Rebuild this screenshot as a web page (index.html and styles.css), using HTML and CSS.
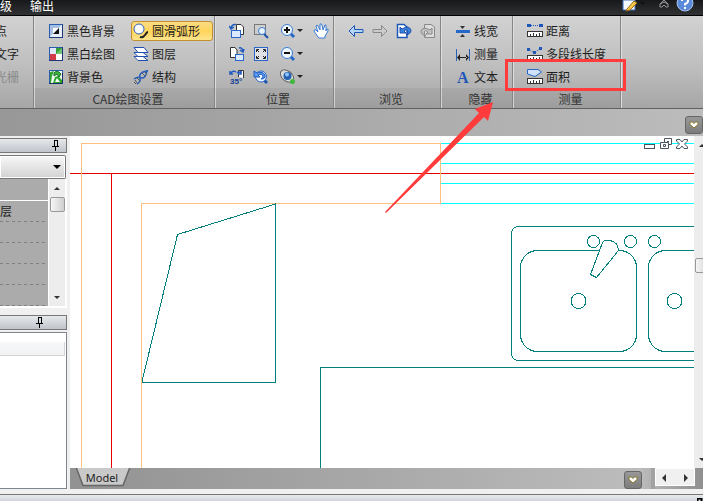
FILE: index.html
```html
<!DOCTYPE html>
<html lang="zh-CN">
<head>
    <meta charset="UTF-8">
    <meta name="viewport" content="width=device-width, initial-scale=1.0">
    <title>CAD</title>
    <link rel="stylesheet" href="styles.css">
</head>
<body>
    <header class="topbar">
        <nav class="tabs">
            <button class="tab">级</button>
            <button class="tab">输出</button>
        </nav>
        <div class="top-tools">
            <button class="top-btn" aria-label="样式">
                <svg width="24" height="12" viewBox="0 0 24 12">
                    <path d="M1 0H13V10H1Z" fill="#f4f8ff" stroke="#3a6cc0"/>
                    <path d="M5 9L12 1L15 3L8 10L4 11Z" fill="#f5c64a" stroke="#9a6c18"/>
                    <path d="M18 2H23L20.500 5Z" fill="#111"/>
                </svg>
            </button>
            <button class="top-btn" aria-label="折叠">
                <svg width="12" height="12" viewBox="0 0 12 12">
                    <path d="M2 4L6 0L10 4M2 7V4L6 2L10 4V7H8L6 5L4 7Z" fill="none" stroke="#999"/>
                </svg>
            </button>
            <button class="top-btn" aria-label="帮助">
                <svg width="18" height="12" viewBox="0 0 18 12">
                    <circle cx="9" cy="3" r="8" fill="#5b8ad8" stroke="#a9c4ee"/>
                    <path d="M6 1Q6 -2 9 -2Q12 -2 12 1Q12 3 9 4V5.500" fill="none" stroke="#fff" stroke-width="2"/>
                    <rect x="8" y="7" width="2" height="2" fill="#fff"/>
                </svg>
            </button>
        </div>
    </header>

    <section class="ribbon">
        <div class="group group-cut">
            <div class="tools">
                <button class="tool">点</button>
                <button class="tool">文字</button>
                <button class="tool" disabled>光栅</button>
            </div>
        </div>

        <div class="group group-settings">
            <div class="tools">
                <button class="tool">
                    <svg class="icon" viewBox="0 0 16 16">
                        <rect x="1.500" y="1.500" width="13" height="13" fill="#fff" stroke="#2a5cb0"/>
                        <path d="M2 2H14L2 14Z" fill="#a8bfe4"/>
                        <path d="M14 2V14H2Z" fill="#e8eef8"/>
                        <path d="M5 5H11L5 11Z" fill="#fff"/>
                        <path d="M11 5V11H5Z" fill="#111"/>
                        <path d="M14.500 1V14.500H1" fill="none" stroke="#1c3a78"/>
                    </svg>
                    黑色背景
                </button>
                <button class="tool active">
                    <svg class="icon" viewBox="0 0 16 16">
                        <circle cx="6" cy="6" r="5" fill="#fff" stroke="#2f62c0"/>
                        <path d="M7 14Q10 15 12 12Q14 9 15 9" fill="none" stroke="#222" stroke-width="2"/>
                    </svg>
                    圆滑弧形
                </button>
                <button class="tool">
                    <svg class="icon" viewBox="0 0 16 16">
                        <rect x="1.500" y="1.500" width="13" height="13" fill="#fff" stroke="#2a5cb0"/>
                        <path d="M8 2H14V8H8Z" fill="#35a035"/>
                        <path d="M14 2V8H8Z" fill="#72c872"/>
                        <path d="M2 8H8V14H2Z" fill="#d33a4a"/>
                        <path d="M2 2H8V8H2Z" fill="#dfe8f8"/>
                        <path d="M14.500 1V14.500H1" fill="none" stroke="#1c3a78"/>
                    </svg>
                    黑白绘图
                </button>
                <button class="tool">
                    <svg class="icon" viewBox="0 0 16 16" stroke="#1f4fb0" fill="#fff">
                        <path d="M1 10.500H10L15 14.500H5Z"/>
                        <path d="M1 6.500H10L15 10.500H5Z"/>
                        <path d="M1 1.500H11L15 6.500H5Z"/>
                    </svg>
                    图层
                </button>
                <button class="tool">
                    <svg class="icon" viewBox="0 0 16 16">
                        <rect x="1.500" y="1.500" width="13" height="13" fill="#f2f8f2" stroke="#2a5cb0"/>
                        <path d="M2 3L6 2L4 7L3 14H2Z" fill="#33a52f"/>
                        <path d="M5 14L7 8L10 7L14 11V14Z" fill="#2ba52b"/>
                        <path d="M6 4Q9 0 13 5L11 8L9 5L6 7Z" fill="#3cb83a" stroke="#1b6a30"/>
                        <path d="M7 13L9 9L12 13Z" fill="#fff"/>
                        <path d="M14.500 4V14.500H1" fill="none" stroke="#123067"/>
                    </svg>
                    背景色
                </button>
                <button class="tool">
                    <svg class="icon" viewBox="0 0 16 16" fill="none" stroke="#2a60b8">
                        <path d="M1 10Q5 7 8 9Q13 10 14 1M4 15Q8 13 7 9Q5 3 15 2" stroke-width="1.500"/>
                        <path d="M2 11L4 14M4 9L7 12M9 4L12 7M12 3L14 5M1 13L3 15" stroke="#555"/>
                    </svg>
                    结构
                </button>
            </div>
            <div class="group-name">CAD绘图设置</div>
        </div>

        <div class="group group-position">
            <div class="tools">
                <button class="tool" aria-label="向左旋转">
                    <svg class="icon" viewBox="0 0 16 16">
                        <path d="M7.500 1.500H12L14.500 4V11.500H7.500Z" fill="#fff" stroke="#333"/>
                        <rect x="2.500" y="7.500" width="9" height="7" fill="#dceaff" stroke="#2a66c8"/>
                        <path d="M7 1.500Q3 1 2 5M0 3L2 6L5 4" fill="none" stroke="#1f5ac0" stroke-width="1.500"/>
                    </svg>
                </button>
                <button class="tool" aria-label="窗口缩放">
                    <svg class="icon" viewBox="0 0 16 16">
                        <rect x="1.500" y="1.500" width="11" height="10" fill="none" stroke="#222" stroke-dasharray="1 1"/>
                        <path d="M11 11L15 15" stroke="#1e4fa8" stroke-width="2"/>
                        <circle cx="9" cy="8" r="3.500" fill="#eaf4ff" stroke="#3a7bd5"/>
                    </svg>
                </button>
                <button class="tool" aria-label="放大">
                    <svg class="icon" viewBox="0 0 16 16">
                        <path d="M10 10L14 14" stroke="#2368c8" stroke-width="3"/>
                        <circle cx="7" cy="7" r="5.500" fill="#eef6ff" stroke="#3a7bd5"/>
                        <path d="M4 7H10M7 4V10" stroke="#111" stroke-width="2"/>
                    </svg>
                    <i class="caret"></i>
                </button>
                <button class="tool" aria-label="平移">
                    <svg class="icon" viewBox="0 0 16 16">
                        <path d="M5 14L1 8Q1 6 3 7L5 9L3 3Q4 1 5 3L7 7L7 1Q8 0 9 2L10 7L12 2Q13 1 13 3L13 8L14 6Q16 6 15 8L12 13V15H6Z" fill="#fff" stroke="#3a7bd5"/>
                    </svg>
                </button>
                <button class="tool" aria-label="向右旋转">
                    <svg class="icon" viewBox="0 0 16 16">
                        <path d="M1.500 1.500H6L8 4V11.500H1.500Z" fill="#fff" stroke="#333"/>
                        <rect x="6.500" y="8.500" width="8" height="6" fill="#dceaff" stroke="#2a66c8"/>
                        <path d="M10 2Q13 1 14 5M11 4L14 6L15 3" fill="none" stroke="#1f5ac0" stroke-width="1.500"/>
                    </svg>
                </button>
                <button class="tool" aria-label="适合窗口">
                    <svg class="icon" viewBox="0 0 16 16">
                        <rect x="1.500" y="1.500" width="13" height="13" fill="#e0e2e6" stroke="#2a66c8"/>
                        <path d="M3.500 6V3.500H6M4 4L6 6M10 3.500H12.500V6M12 4L10 6M3.500 10V12.500H6M4 12L6 10M12.500 10V12.500H10M12 12L10 10" fill="none" stroke="#222"/>
                    </svg>
                </button>
                <button class="tool" aria-label="缩小">
                    <svg class="icon" viewBox="0 0 16 16">
                        <path d="M10 10L14 14" stroke="#2368c8" stroke-width="3"/>
                        <circle cx="7" cy="7" r="5.500" fill="#eef6ff" stroke="#3a7bd5"/>
                        <path d="M4 7H10" stroke="#111" stroke-width="2"/>
                    </svg>
                    <i class="caret"></i>
                </button>
                <span></span>
                <button class="tool" aria-label="旋转35度">
                    <svg class="icon" viewBox="0 0 16 16">
                        <path d="M9.500 8V1.500H14.500V9" fill="#fff" stroke="#333"/>
                        <path d="M7 3Q4 1 2 4M1 2V5H4M8 4Q10 2 12 4M12 2V5H9" fill="none" stroke="#1f5ac0" stroke-width="1.500"/>
                        <text class="icon-text" x="1" y="15">35°</text>
                    </svg>
                </button>
                <button class="tool" aria-label="上一视图">
                    <svg class="icon" viewBox="0 0 16 16">
                        <path d="M11 11L14 14" stroke="#1e55b0" stroke-width="3"/>
                        <circle cx="8" cy="7.500" r="5.500" fill="#eef6ff" stroke="#2a66c8"/>
                        <path d="M1 2V8H7L5 6Q9 4 10 7Q10 9 8 10Q13 10 12 6Q10 2 4 4Z" fill="#5a9af0" stroke="#1f5ac0"/>
                    </svg>
                </button>
                <button class="tool" aria-label="三维视图">
                    <svg class="icon" viewBox="0 0 16 16">
                        <ellipse cx="7" cy="7" rx="7.500" ry="5" transform="rotate(40 7 7)" fill="#d8dcd8" stroke="#666"/>
                        <circle cx="7.500" cy="7" r="4" fill="#2360b0"/>
                        <circle cx="7" cy="5.500" r="2" fill="#8cc4ff"/>
                        <circle cx="12.500" cy="12.500" r="2.500" fill="#3db83d"/>
                    </svg>
                    <i class="caret"></i>
                </button>
            </div>
            <div class="group-name">位置</div>
        </div>

        <div class="group group-browse">
            <div class="tools">
                <button class="tool" aria-label="后退">
                    <svg class="icon" viewBox="0 0 16 16">
                        <path d="M1 8L6.500 2.500V6.500H15V9.500H6.500V13.500Z" fill="#b4d4fa" stroke="#1f57b8"/>
                    </svg>
                </button>
                <button class="tool" aria-label="前进" disabled>
                    <svg class="icon" viewBox="0 0 16 16">
                        <path d="M15 8L9.500 2.500V6.500H1V9.500H9.500V13.500Z" fill="#ccc" stroke="#8a8a8a"/>
                    </svg>
                </button>
                <button class="tool" aria-label="撤销">
                    <svg class="icon" viewBox="0 0 16 16">
                        <path d="M1.500 1.500H8L11 4V14.500H1.500Z" fill="#fff" stroke="#1f57b8" stroke-width="1.500"/>
                        <path d="M4 4V10H10L8 8Q11 5 12 8Q12 10 10 12Q15 11 15 7Q13 2 6 6Z" fill="#3a82e0" stroke="#1a4ea8"/>
                    </svg>
                </button>
                <button class="tool" aria-label="重做" disabled>
                    <svg class="icon" viewBox="0 0 16 16">
                        <path d="M4.500 1.500H11L14.500 4V14.500H4.500Z" fill="#ddd" stroke="#888"/>
                        <path d="M12 5V11H6L8 9Q5 6 4 9Q4 11 6 13Q1 12 1 8Q3 3 10 7Z" fill="#c4c4c4" stroke="#888"/>
                    </svg>
                </button>
            </div>
            <div class="group-name">浏览</div>
        </div>

        <div class="group group-hide">
            <div class="tools">
                <button class="tool">
                    <svg class="icon" viewBox="0 0 16 16">
                        <rect x="1" y="7" width="14" height="3" fill="#2468c8"/>
                        <path d="M5 3H10L7.500 6ZM5 14H10L7.500 11Z" fill="#333"/>
                    </svg>
                    线宽
                </button>
                <button class="tool">
                    <svg class="icon" viewBox="0 0 16 16">
                        <path d="M1.500 3V15M14.500 3V15" stroke="#2a60b8"/>
                        <path d="M2 11.500L5 8V15ZM14 11.500L11 8V15ZM4 11H12V12H4Z" fill="#222"/>
                    </svg>
                    测量
                </button>
                <button class="tool">
                    <svg class="icon" viewBox="0 0 16 16">
                        <text class="icon-letter" x="2" y="14">A</text>
                    </svg>
                    文本
                </button>
            </div>
            <div class="group-name">隐藏</div>
        </div>

        <div class="group group-measure">
            <div class="tools">
                <button class="tool">
                    <svg class="icon" viewBox="0 0 16 16">
                        <path d="M4 2.500H12" stroke="#1f57b8" stroke-dasharray="1 1"/>
                        <path d="M0 1H4V4H0ZM12 1H16V4H12Z" fill="#1f57b8"/>
                        <rect x="0.500" y="8.500" width="15" height="5" fill="#fff" stroke="#333"/>
                        <path d="M3.500 13V11M6.500 13V10M9.500 13V11M12.500 13V10" stroke="#333"/>
                    </svg>
                    距离
                </button>
                <button class="tool">
                    <svg class="icon" viewBox="0 0 16 16">
                        <path d="M2 3L7 7L14 2" fill="none" stroke="#1f57b8" stroke-dasharray="1 1"/>
                        <path d="M0 2H3V5H0ZM6 5H9V8H6ZM12 1H15V4H12Z" fill="#1f57b8"/>
                        <rect x="0.500" y="9.500" width="15" height="5" fill="#fff" stroke="#333"/>
                        <path d="M3.500 14V12M6.500 14V11M9.500 14V12M12.500 14V11" stroke="#333"/>
                    </svg>
                    多段线长度
                </button>
                <button class="tool">
                    <svg class="icon" viewBox="0 0 16 16">
                        <path d="M0.500 0.500H11L14.500 3L8 7.500L0.500 5Z" fill="#cfe2fa" stroke="#2a66c8"/>
                        <rect x="0.500" y="9.500" width="15" height="5" fill="#fff" stroke="#333"/>
                        <path d="M3.500 14V12M6.500 14V11M9.500 14V12M12.500 14V11" stroke="#333"/>
                    </svg>
                    面积
                </button>
            </div>
            <div class="group-name">测量</div>
        </div>
    </section>

    <div class="strip">
        <button class="drop-btn" aria-label="展开">
            <svg width="10" height="8" viewBox="0 0 10 8"><path d="M1 1H3.500L5 2.500L6.500 1H9V3.500L5 7L1 3.500Z" fill="#fff" stroke="#8a7a30"/></svg>
        </button>
    </div>

    <main class="main">
        <aside class="side">
            <div class="panel-head">
                <svg class="pin" viewBox="0 0 8 11"><path d="M2 0.500H6M2.500 0V6M5.500 0V6M0 6.500H7M3.500 7V11" stroke="#000" fill="none"/><path d="M5 1H6V6H5Z"/></svg>
            </div>
            <div class="combo">
                <select class="combo-select" aria-label="对象"><option></option></select>
                <svg class="combo-arrow" width="8" height="4" viewBox="0 0 8 4"><path d="M0 0H8L4 4Z"/></svg>
            </div>
            <div class="props">
                <div class="prop-rows">
                    <div class="prop prop-title"></div>
                    <div class="prop">层</div>
                    <div class="prop"></div>
                    <div class="prop"></div>
                    <div class="prop"></div>
                    <div class="prop"></div>
                </div>
                <div class="scroll">
                    <button class="scroll-btn" aria-label="向上"><svg width="6" height="3" viewBox="0 0 6 3"><path d="M0 3H6L3 0Z" fill="#333"/></svg></button>
                    <div class="scroll-thumb"></div>
                    <button class="scroll-btn scroll-end" aria-label="向下"><svg width="6" height="3" viewBox="0 0 6 3"><path d="M0 0H6L3 3Z" fill="#333"/></svg></button>
                </div>
            </div>
            <div class="panel-head panel-head-second">
                <svg class="pin" viewBox="0 0 8 11"><path d="M2 0.500H6M2.500 0V6M5.500 0V6M0 6.500H7M3.500 7V11" stroke="#000" fill="none"/><path d="M5 1H6V6H5Z"/></svg>
            </div>
            <div class="panel-body">
                <div class="column-head"></div>
            </div>
        </aside>

        <div class="workspace">
            <div class="view">
                <div class="canvas">
                    <svg class="drawing" shape-rendering="crispEdges">
                        <g transform="translate(-70 -136)" fill="none">
                            <path d="M441 143.500H3000M441 163.500H3000M441 183.500H3000M441 203.500H3000" stroke="#00ffff"/>
                            <path d="M70 173.500H3000M111.500 173V3000" stroke="#e60000"/>
                            <path d="M81.500 3000V143.500H440.500V203.500H141.500V3000" stroke="#ffbf7f"/>
                            <g stroke="#007f7f">
                                <path d="M142 381.500L177.500 234.500L275.500 204V382.500H142"/>
                                <path d="M320.500 3000V367.500H3000"/>
                                <rect x="511.500" y="226.500" width="260" height="134" rx="7"/>
                                <rect x="520.500" y="250.500" width="116" height="101" rx="17"/>
                                <rect x="648.500" y="250.500" width="61" height="101" rx="17"/>
                                <circle cx="593.500" cy="241.500" r="6"/>
                                <circle cx="630.500" cy="241.500" r="6"/>
                                <circle cx="654.500" cy="241.500" r="6"/>
                                <circle cx="578.500" cy="301" r="7.500"/>
                                <circle cx="674.500" cy="301" r="7.500"/>
                                <path d="M590.500 274.500L602.500 242.500Q605 239 610 240.500Q618 242 618.500 250.500L596.500 277.500Z" fill="#fff"/>
                            </g>
                        </g>
                    </svg>
                    <div class="win-controls">
                        <button class="win-btn" aria-label="最小化"><svg width="12" height="12" viewBox="0 0 12 12"><rect x="0.500" y="6.500" width="10" height="4" fill="#fff" stroke="#4a5560"/></svg></button>
                        <button class="win-btn" aria-label="还原"><svg width="12" height="12" viewBox="0 0 12 12" fill="#fff" stroke="#4a5560"><path d="M4.500 0.500H11.500V6.500H4.500Z"/><path d="M7 3.500H9"/><path d="M0.500 4.500H8.500V10.500H0.500Z"/><path d="M3.500 6.500H5.500V8.500H3.500Z"/></svg></button>
                        <button class="win-btn" aria-label="关闭"><svg width="12" height="12" viewBox="0 0 12 12"><path d="M0.500 1.500H4L6 4L8 1.500H11.500V3L8.500 6L11.500 9V10.500H8L6 8L4 10.500H0.500V9L3.500 6L0.500 3Z" fill="#fff" stroke="#4a5560"/></svg></button>
                    </div>
                </div>
                <div class="scroll scroll-view">
                    <button class="scroll-btn" aria-label="向上"><svg width="6" height="3" viewBox="0 0 6 3"><path d="M0 3H6L3 0Z" fill="#333"/></svg></button>
                    <div class="scroll-thumb"></div>
                    <button class="scroll-btn scroll-end" aria-label="向下"><svg width="6" height="3" viewBox="0 0 6 3"><path d="M0 0H6L3 3Z" fill="#333"/></svg></button>
                </div>
            </div>
            <div class="sheet-bar">
                <button class="sheet">
                    <svg class="sheet-shape" width="56" height="19" viewBox="0 0 56 19"><path d="M1 -1L8 17.500H48L55 -1" fill="#c9c9c9" stroke="#666" stroke-width="1.500"/></svg>
                    <span class="sheet-name">Model</span>
                </button>
                <button class="drop-btn" aria-label="展开">
                    <svg width="10" height="8" viewBox="0 0 10 8"><path d="M1 1H3.500L5 2.500L6.500 1H9V3.500L5 7L1 3.500Z" fill="#fff" stroke="#8a7a30"/></svg>
                </button>
                <div class="splitter"></div>
                <div class="hscroll">
                    <button class="scroll-btn" aria-label="向左"><svg width="4" height="8" viewBox="0 0 4 8"><path d="M4 0V8L0 4Z" fill="#333"/></svg></button>
                    <button class="scroll-btn" aria-label="向右"><svg width="4" height="8" viewBox="0 0 4 8"><path d="M0 0V8L4 4Z" fill="#333"/></svg></button>
                </div>
            </div>
        </div>
    </main>

    <footer class="dock">
        <svg class="dock-pin" width="6" height="3" viewBox="0 0 6 3"><path d="M0.500 3V0.500H4.500V3" fill="none" stroke="#000" stroke-width="2"/></svg>
    </footer>

    <div class="mark-box"></div>
    <svg class="mark-arrow" width="110" height="114" viewBox="0 0 110 114">
        <path d="M108 1L90 8L94 12L0 111L1 112L99 16L103 20Z" fill="#ff3b3b"/>
    </svg>
</body>
</html>
```

FILE: styles.css
```css
:root {
    --ui-border: #777777;
    --panel-color: #f0f0f0;
    --mark-color: #ff3b3b;
}

* {
    margin: 0;
    padding: 0;
    box-sizing: border-box;
}

body {
    position: relative;
    display: flex;
    flex-direction: column;
    height: 100vh;
    overflow: hidden;
    font-family: "Noto Sans CJK SC", sans-serif;
    font-size: 12px;
    line-height: 16px;
    color: #1e1e1e;
    background-color: var(--panel-color);
}

button {
    font: inherit;
    color: inherit;
    background: none;
    border: none;
}

svg {
    display: block;
    flex: none;
}

/* top bar */
.topbar {
    display: flex;
    justify-content: space-between;
    height: 16px;
    flex: none;
    overflow: hidden;
    background: linear-gradient(#17181a, #303234);
    border-bottom: 1px solid #000;
}

.tabs {
    display: flex;
    gap: 18px;
}

.tab {
    height: 11px;
    line-height: 11px;
    color: #fff;
    white-space: nowrap;
}

.top-tools {
    display: flex;
    gap: 12px;
    padding-right: 9px;
}

.top-btn {
    height: 12px;
}

.top-btn:last-child {
    margin-left: -6px;
}

/* ribbon */
.ribbon {
    display: flex;
    flex: none;
    height: 93px;
    background: linear-gradient(#d2d2d2, #bebebe 55%, #a6a6a6);
    border-bottom: 1px solid #626262;
}

.group {
    display: flex;
    flex-direction: column;
    flex: none;
    border-right: 1px solid #858585;
    box-shadow: 1px 0 0 #dedede;
}

.tools {
    display: grid;
    grid-auto-rows: 23px;
    align-items: center;
    justify-items: start;
    padding: 3px 0 0 12px;
}

.group-name {
    height: 20px;
    padding: 3px 0 0 8px;
    text-align: center;
    color: #333;
    background-color: rgba(0, 0, 0, 0.05);
}

.group-cut {
    width: 34px;
}

.group-cut .tools {
    margin-left: -19px;
}

.group-settings {
    width: 181px;
}

.group-settings .tools {
    grid-template-columns: 85px 82px;
}

.group-position {
    width: 119px;
}

.group-position .tools {
    grid-template-columns: 24px 27px 33px 20px;
}

.group-browse {
    width: 107px;
    justify-content: space-between;
}

.group-browse .tools {
    grid-template-columns: repeat(4, 24px);
}

.group-hide {
    width: 72px;
}

.group-measure {
    width: 108px;
}

.tool {
    display: flex;
    align-items: center;
    gap: 3px;
    height: 20px;
    padding: 0 1px;
    border: 1px solid transparent;
    border-radius: 3px;
    white-space: nowrap;
}

.tool:disabled {
    color: #8b8b8b;
}

.tool.active {
    width: 82px;
    background: linear-gradient(#fbdc85, #fed45a 50%, #ffe48c);
    border-color: #c29030;
}

.icon {
    width: 16px;
    height: 16px;
}

.icon-text {
    font-family: "Liberation Sans", sans-serif;
    font-size: 8px;
    font-weight: bold;
    fill: #123f96;
}

.icon-letter {
    font-family: "Liberation Serif", serif;
    font-size: 16px;
    font-weight: bold;
    fill: #1f57b8;
}

.caret {
    border: 3px solid transparent;
    border-top-color: #222;
    border-bottom-width: 0;
}

.tool .caret {
    margin-left: -2px;
}

/* strip under the ribbon */
.strip {
    display: flex;
    justify-content: flex-end;
    align-items: center;
    flex: none;
    height: 27px;
    padding-top: 5px;
    background: linear-gradient(90deg, #979797, #bcbcbc);
}

.drop-btn {
    display: flex;
    align-items: center;
    justify-content: center;
    width: 18px;
    height: 18px;
    border: 1px solid #666;
    border-radius: 3px;
    background: linear-gradient(#989898, #7c7c7c);
}

/* side panels */
.main {
    display: flex;
    flex: 1;
    min-height: 0;
}

.side {
    display: flex;
    flex-direction: column;
    flex: none;
    width: 70px;
    padding: 2px 3px 0 0;
    background-color: var(--panel-color);
}

.panel-head {
    display: flex;
    justify-content: flex-end;
    align-items: center;
    flex: none;
    height: 15px;
    padding-right: 6px;
    border: 1px solid var(--ui-border);
    border-left: none;
    background: linear-gradient(#e6e8ea, #c0c5cc);
}

.panel-head-second {
    margin-top: 7px;
    padding-right: 22px;
}

.pin {
    width: 8px;
    height: 11px;
}

.combo {
    position: relative;
    flex: none;
    height: 24px;
    margin-top: 2px;
}

.combo-select {
    appearance: none;
    width: 66px;
    height: 24px;
    border: 1px solid var(--ui-border);
    border-left: none;
    border-radius: 0 2px 2px 0;
    background: linear-gradient(#f8f8f8, #d2d2d2);
    box-shadow: inset 0 0 0 1px #fff;
}

.combo-arrow {
    position: absolute;
    right: 6px;
    top: 10px;
}

.props {
    display: flex;
    flex: none;
    height: 129px;
    background-color: #fff;
}

.prop-rows {
    flex: none;
    width: 48px;
    margin-bottom: 2px;
    overflow: hidden;
    background-color: #ababab;
}

.prop {
    height: 21px;
    padding-top: 2px;
    background: repeating-linear-gradient(90deg, #808080 0 3px, transparent 3px 6px) left bottom / 100% 1px no-repeat;
}

.prop-title {
    height: 22px;
    background: none;
    border-bottom: 1px solid #fff;
}

.scroll {
    display: flex;
    flex-direction: column;
    align-items: center;
    width: 16px;
    margin: 0 1px 2px;
    background-color: #ededed;
}

.scroll-btn {
    display: flex;
    align-items: center;
    justify-content: center;
    width: 16px;
    height: 18px;
    flex: none;
}

.scroll-thumb {
    flex: none;
    width: 15px;
    height: 15px;
    border: 1px solid #999;
    border-radius: 2px;
    background: linear-gradient(90deg, #f6f6f6, #cfcfcf);
}

.scroll-end {
    margin-top: auto;
}

.panel-body {
    flex: 1;
    margin-top: 2px;
    padding: 9px 1px 0 0;
    border: 1px solid #7e858c;
    border-left: none;
    background-color: #fff;
}

.column-head {
    height: 14px;
    border-right: 1px solid #d5d5d5;
    border-bottom: 1px solid #d5d5d5;
    background: linear-gradient(#f7f8fa, #f1f2f4);
}

/* drawing area */
.workspace {
    display: flex;
    flex-direction: column;
    flex: 1;
    min-width: 0;
}

.view {
    display: flex;
    flex: 1;
    min-height: 0;
}

.canvas {
    position: relative;
    flex: 1;
    min-width: 0;
    overflow: hidden;
    background-color: #fff;
}

.drawing {
    width: 100%;
    height: 100%;
}

.win-controls {
    position: absolute;
    top: 2px;
    right: 6px;
    display: flex;
    gap: 4px;
}

.scroll-view {
    align-items: flex-start;
    width: 9px;
    margin: 0;
    overflow: hidden;
}

.scroll-view .scroll-thumb {
    margin: 104px 0 0 1px;
}

.sheet-bar {
    display: flex;
    align-items: center;
    flex: none;
    height: 21px;
    padding-right: 8px;
    background: linear-gradient(90deg, #929292, #bcbcbc 90%, #8f8f8f);
}

.sheet {
    position: relative;
    align-self: flex-start;
    width: 56px;
    height: 19px;
    margin: 0 auto 0 5px;
}

.sheet-shape {
    position: absolute;
    top: 0;
    left: 0;
}

.sheet-name {
    position: relative;
    display: block;
    padding-right: 2px;
    font-family: "Noto Sans", sans-serif;
    font-size: 11px;
    line-height: 16px;
}

.sheet-bar .drop-btn {
    margin-top: 3px;
}

.splitter {
    width: 4px;
    height: 21px;
    margin-left: 9px;
    background-color: #a2a2a2;
}

.hscroll {
    display: flex;
    align-self: flex-start;
    justify-content: space-between;
    width: 40px;
    height: 18px;
    border: 1px solid #fff;
    background-color: #f0f0f0;
}

/* bottom dock */
.dock {
    display: flex;
    justify-content: flex-end;
    align-items: flex-end;
    flex: none;
    height: 12px;
    border-top: 5px solid var(--panel-color);
    background: linear-gradient(#777 1px, #e8eaec 1px, #d0d4da);
}

/* annotation over the window */
.mark-box {
    position: absolute;
    left: 505px;
    top: 59px;
    width: 121px;
    height: 32px;
    border: 3px solid var(--mark-color);
}

.mark-arrow {
    position: absolute;
    left: 385px;
    top: 101px;
}
```
